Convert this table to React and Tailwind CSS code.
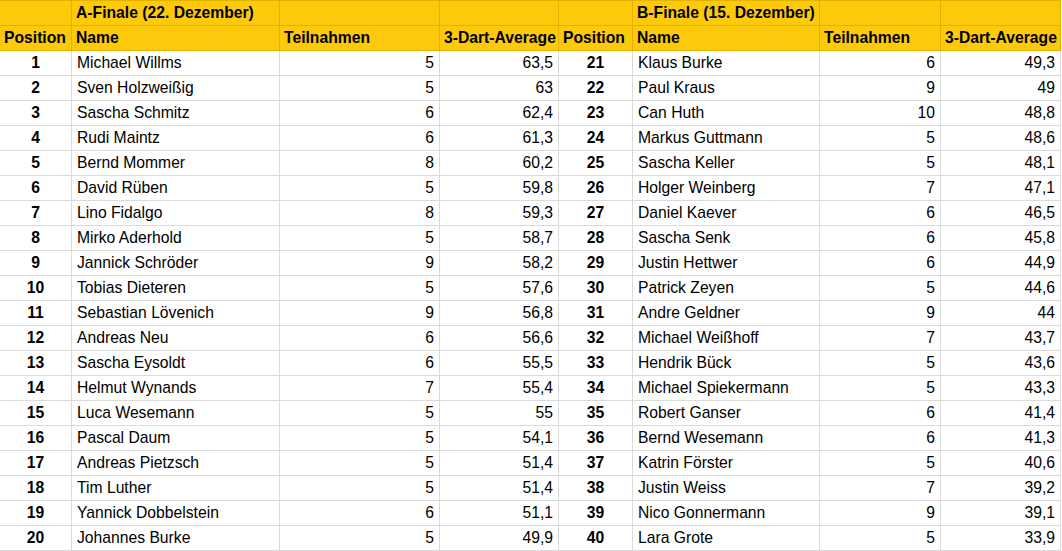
import React from "react";

const rowsA = [
  ["Michael Willms", 5, "63,5"],
  ["Sven Holzweißig", 5, "63"],
  ["Sascha Schmitz", 6, "62,4"],
  ["Rudi Maintz", 6, "61,3"],
  ["Bernd Mommer", 8, "60,2"],
  ["David Rüben", 5, "59,8"],
  ["Lino Fidalgo", 8, "59,3"],
  ["Mirko Aderhold", 5, "58,7"],
  ["Jannick Schröder", 9, "58,2"],
  ["Tobias Dieteren", 5, "57,6"],
  ["Sebastian Lövenich", 9, "56,8"],
  ["Andreas Neu", 6, "56,6"],
  ["Sascha Eysoldt", 6, "55,5"],
  ["Helmut Wynands", 7, "55,4"],
  ["Luca Wesemann", 5, "55"],
  ["Pascal Daum", 5, "54,1"],
  ["Andreas Pietzsch", 5, "51,4"],
  ["Tim Luther", 5, "51,4"],
  ["Yannick Dobbelstein", 6, "51,1"],
  ["Johannes Burke", 5, "49,9"],
];

const rowsB = [
  ["Klaus Burke", 6, "49,3"],
  ["Paul Kraus", 9, "49"],
  ["Can Huth", 10, "48,8"],
  ["Markus Guttmann", 5, "48,6"],
  ["Sascha Keller", 5, "48,1"],
  ["Holger Weinberg", 7, "47,1"],
  ["Daniel Kaever", 6, "46,5"],
  ["Sascha Senk", 6, "45,8"],
  ["Justin Hettwer", 6, "44,9"],
  ["Patrick Zeyen", 5, "44,6"],
  ["Andre Geldner", 9, "44"],
  ["Michael Weißhoff", 7, "43,7"],
  ["Hendrik Bück", 5, "43,6"],
  ["Michael Spiekermann", 5, "43,3"],
  ["Robert Ganser", 6, "41,4"],
  ["Bernd Wesemann", 6, "41,3"],
  ["Katrin Förster", 5, "40,6"],
  ["Justin Weiss", 7, "39,2"],
  ["Nico Gonnermann", 9, "39,1"],
  ["Lara Grote", 5, "33,9"],
];

const widths = [72, 208, 160, 119, 74, 187, 121, 120];

export default function App() {
  const hd = "h-[25px] border border-[#e3b200] bg-[#fcc90b] font-bold px-[4px] whitespace-nowrap overflow-hidden";
  const td = "h-[25px] border border-[#dadada] px-[5px] whitespace-nowrap overflow-hidden";
  return (
    <div className="w-[1062px] h-[551px] bg-white overflow-hidden font-['Liberation_Sans'] text-[15.7px] leading-[18px] text-black">
      <table className="table-fixed border-collapse w-[1062px] -ml-px">
        <colgroup>
          {widths.map((w, i) => (
            <col key={i} style={{ width: w }} />
          ))}
        </colgroup>
        <tbody>
          {/* title row */}
          <tr>
            <td className={hd}></td>
            <td className={hd}>A-Finale (22. Dezember)</td>
            <td className={hd}></td>
            <td className={hd}></td>
            <td className={hd}></td>
            <td className={hd}>B-Finale (15. Dezember)</td>
            <td className={hd}></td>
            <td className={hd}></td>
          </tr>
          {/* column headings */}
          <tr>
            <td className={hd}>Position</td>
            <td className={hd}>Name</td>
            <td className={hd}>Teilnahmen</td>
            <td className={hd}>3-Dart-Average</td>
            <td className={hd}>Position</td>
            <td className={hd}>Name</td>
            <td className={hd}>Teilnahmen</td>
            <td className={hd}>3-Dart-Average</td>
          </tr>
          {rowsA.map((a, i) => {
            const b = rowsB[i];
            return (
              <tr key={i}>
                <td className={td + " text-center font-bold"}>{i + 1}</td>
                <td className={td}>{a[0]}</td>
                <td className={td + " text-right"}>{a[1]}</td>
                <td className={td + " text-right"}>{a[2]}</td>
                <td className={td + " text-center font-bold"}>{i + 21}</td>
                <td className={td}>{b[0]}</td>
                <td className={td + " text-right"}>{b[1]}</td>
                <td className={td + " text-right"}>{b[2]}</td>
              </tr>
            );
          })}
        </tbody>
      </table>
    </div>
  );
}
